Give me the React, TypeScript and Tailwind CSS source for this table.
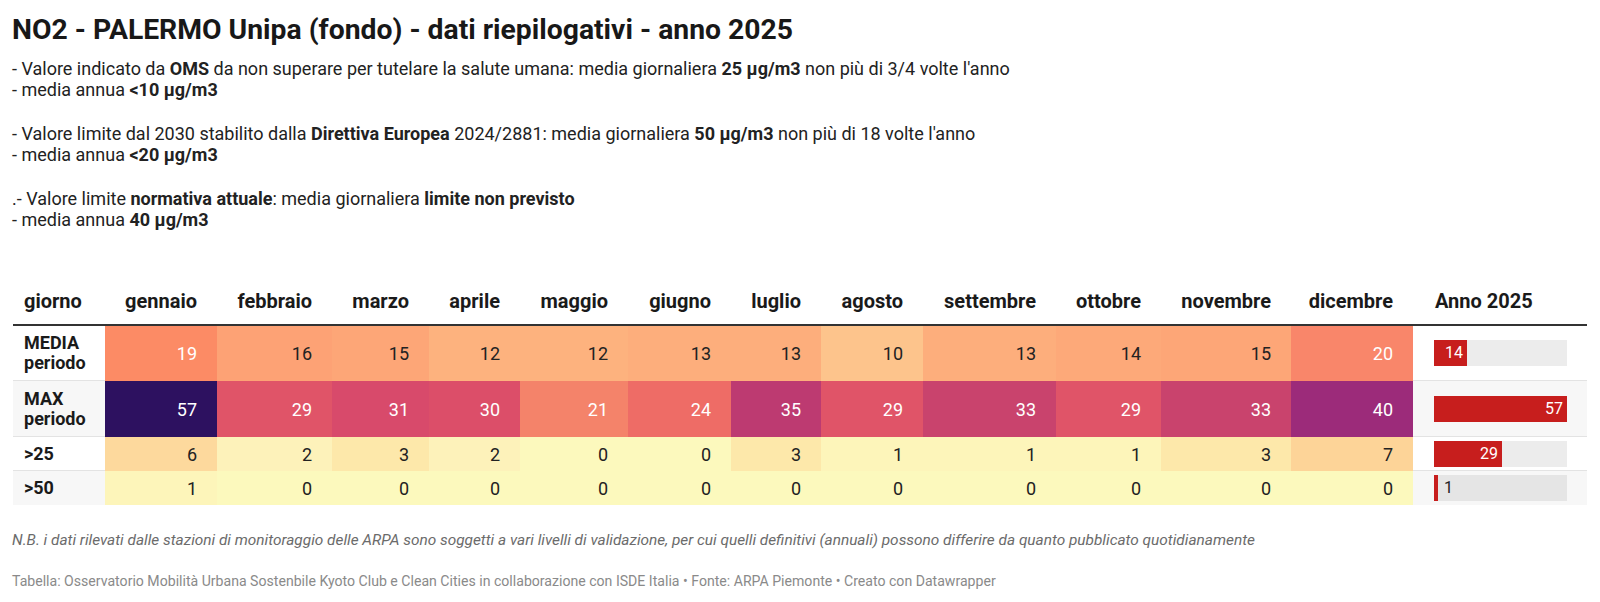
const months = [
  'gennaio',
  'febbraio',
  'marzo',
  'aprile',
  'maggio',
  'giugno',
  'luglio',
  'agosto',
  'settembre',
  'ottobre',
  'novembre',
  'dicembre',
];

type Cell = { v: number; bg: string; light?: boolean };

type Row = {
  label: string[];
  cells: Cell[];
  total: number;
  tall?: boolean;
  striped?: boolean;
};

const rows: Row[] = [
  {
    label: ['MEDIA', 'periodo'],
    tall: true,
    total: 14,
    cells: [
      { v: 19, bg: 'bg-[#fc8b65]', light: true },
      { v: 16, bg: 'bg-[#fda275]' },
      { v: 15, bg: 'bg-[#fda677]' },
      { v: 12, bg: 'bg-[#fdb27e]' },
      { v: 12, bg: 'bg-[#fdb27e]' },
      { v: 13, bg: 'bg-[#fdae7c]' },
      { v: 13, bg: 'bg-[#fdae7c]' },
      { v: 10, bg: 'bg-[#fdc48c]' },
      { v: 13, bg: 'bg-[#fdae7c]' },
      { v: 14, bg: 'bg-[#fda979]' },
      { v: 15, bg: 'bg-[#fda677]' },
      { v: 20, bg: 'bg-[#f9866a]', light: true },
    ],
  },
  {
    label: ['MAX', 'periodo'],
    tall: true,
    striped: true,
    total: 57,
    cells: [
      { v: 57, bg: 'bg-[#2d1160]', light: true },
      { v: 29, bg: 'bg-[#e05468]', light: true },
      { v: 31, bg: 'bg-[#d84a6b]', light: true },
      { v: 30, bg: 'bg-[#dc4e69]', light: true },
      { v: 21, bg: 'bg-[#f4836a]', light: true },
      { v: 24, bg: 'bg-[#ee6c66]', light: true },
      { v: 35, bg: 'bg-[#bd3a71]', light: true },
      { v: 29, bg: 'bg-[#e05468]', light: true },
      { v: 33, bg: 'bg-[#c9436d]', light: true },
      { v: 29, bg: 'bg-[#e05468]', light: true },
      { v: 33, bg: 'bg-[#c9436d]', light: true },
      { v: 40, bg: 'bg-[#9c2b7a]', light: true },
    ],
  },
  {
    label: ['>25'],
    total: 29,
    cells: [
      { v: 6, bg: 'bg-[#fdd99d]' },
      { v: 2, bg: 'bg-[#fdf2ba]' },
      { v: 3, bg: 'bg-[#fde8aa]' },
      { v: 2, bg: 'bg-[#fdf2ba]' },
      { v: 0, bg: 'bg-[#fcf9bd]' },
      { v: 0, bg: 'bg-[#fcf9bd]' },
      { v: 3, bg: 'bg-[#fde8aa]' },
      { v: 1, bg: 'bg-[#fdf5ba]' },
      { v: 1, bg: 'bg-[#fdf5ba]' },
      { v: 1, bg: 'bg-[#fdf5ba]' },
      { v: 3, bg: 'bg-[#fde8aa]' },
      { v: 7, bg: 'bg-[#fdd498]' },
    ],
  },
  {
    label: ['>50'],
    striped: true,
    total: 1,
    cells: [
      { v: 1, bg: 'bg-[#fdf5ba]' },
      { v: 0, bg: 'bg-[#fcf9bd]' },
      { v: 0, bg: 'bg-[#fcf9bd]' },
      { v: 0, bg: 'bg-[#fcf9bd]' },
      { v: 0, bg: 'bg-[#fcf9bd]' },
      { v: 0, bg: 'bg-[#fcf9bd]' },
      { v: 0, bg: 'bg-[#fcf9bd]' },
      { v: 0, bg: 'bg-[#fcf9bd]' },
      { v: 0, bg: 'bg-[#fcf9bd]' },
      { v: 0, bg: 'bg-[#fcf9bd]' },
      { v: 0, bg: 'bg-[#fcf9bd]' },
      { v: 0, bg: 'bg-[#fcf9bd]' },
    ],
  },
];

const grid =
  'grid grid-cols-[92px_112px_115px_97px_91px_108px_103px_90px_102px_133px_105px_130px_122px_174px]';

const MAX = 57;
const TRACK = 133;

function Bar({ value, striped }: { value: number; striped?: boolean }) {
  const w = Math.round((value / MAX) * TRACK);
  const inside = w > 30;
  return (
    <div
      className={`flex h-[26px] w-[133px] ${striped ? 'bg-[#e5e5e5]' : 'bg-[#ececec]'}`}
    >
      <div
        className="flex h-full items-center justify-end bg-[#c71e1d] pr-[4px] text-[16px] text-white"
        style={{ width: Math.max(w, 2) }}
      >
        {inside && value}
      </div>
      {!inside && (
        <span className="ml-[6px] flex items-center text-[16px] text-[#222]">{value}</span>
      )}
    </div>
  );
}

export default function App() {
  return (
    <div className="min-h-screen bg-white pl-[12px] pt-[13px] font-['Roboto',sans-serif] text-[#1d1d1d]">
      <h1 className="text-[28.3px] font-bold leading-[33px] text-[#181818]">
        NO2 - PALERMO Unipa (fondo) - dati riepilogativi - anno 2025
      </h1>

      <div className="mt-[12px] text-[18px] leading-[21px] text-[#222]">
        <p>
          - Valore indicato da <b>OMS</b> da non superare per tutelare la salute umana: media
          giornaliera <b>25 µg/m3</b> non più di 3/4 volte l'anno
          <br />- media annua <b>&lt;10 µg/m3</b>
        </p>
        <p className="mt-[23px]">
          - Valore limite dal 2030 stabilito dalla <b>Direttiva Europea</b> 2024/2881: media
          giornaliera <b>50 µg/m3</b> non più di 18 volte l'anno
          <br />- media annua <b>&lt;20 µg/m3</b>
        </p>
        <p className="mt-[23px]">
          .- Valore limite <b>normativa attuale</b>: media giornaliera <b>limite non previsto</b>
          <br />- media annua <b>40 µg/m3</b>
        </p>
      </div>

      <div className="ml-[1px] mt-[51px] w-[1574px]">
        <div className={`${grid} border-b-2 border-[#333] text-[20px] font-bold leading-[23px] text-[#1a1a1a]`}>
          <div className="pb-[11px] pl-[11px] pt-[9px]">giorno</div>
          {months.map((m) => (
            <div key={m} className="pb-[11px] pr-[20px] pt-[9px] text-right">
              {m}
            </div>
          ))}
          <div className="pb-[11px] pl-[22px] pt-[9px]">Anno 2025</div>
        </div>

        {rows.map((row, i) => (
          <div
            key={i}
            className={`${grid} ${row.tall ? (i === 0 ? 'h-[55px]' : 'h-[56px]') : 'h-[34px]'} text-[18px]`}
          >
            <div
              className={`flex flex-col justify-center pl-[11px] font-bold leading-[20px] text-[#1a1a1a] ${
                i < rows.length - 1 ? 'border-b border-[#e3e3e3]' : ''
              } ${row.striped ? 'bg-[#f7f7f7]' : 'bg-white'}`}
            >
              {row.label.map((l) => (
                <span key={l}>{l}</span>
              ))}
            </div>
            {row.cells.map((c, j) => (
              <div
                key={j}
                className={`flex items-center justify-end pr-[20px] ${c.bg} ${
                  c.light ? 'text-white' : 'text-[#222]'
                }`}
              >
                {c.v}
              </div>
            ))}
            <div
              className={`flex items-center pl-[21px] ${
                i < rows.length - 1 ? 'border-b border-[#e3e3e3]' : ''
              } ${row.striped ? 'bg-[#f7f7f7]' : 'bg-white'}`}
            >
              <Bar value={row.total} striped={row.striped} />
            </div>
          </div>
        ))}
      </div>

      <p className="mt-[25px] text-[15.4px] italic leading-[20px] text-[#6b6b6b]">
        N.B. i dati rilevati dalle stazioni di monitoraggio delle ARPA sono soggetti a vari livelli
        di validazione, per cui quelli definitivi (annuali) possono differire da quanto pubblicato
        quotidianamente
      </p>
      <p className="mt-[22px] text-[14.1px] leading-[18px] text-[#8a8a8a]">
        Tabella: Osservatorio Mobilità Urbana Sostenbile Kyoto Club e Clean Cities in collaborazione
        con ISDE Italia • Fonte: ARPA Piemonte • Creato con Datawrapper
      </p>
    </div>
  );
}
